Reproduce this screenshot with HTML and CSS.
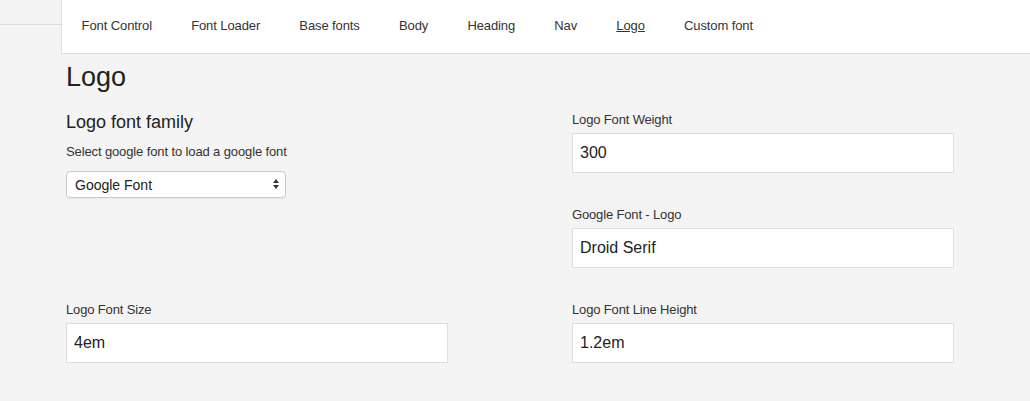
FILE: index.html
```html
<!DOCTYPE html>
<html lang="en">
<head>
<meta charset="utf-8">
<title>Logo</title>
<link rel="stylesheet" href="styles.css">
</head>
<body>
<div class="page">
  <aside class="side"><div class="side-top"></div></aside>
  <div class="main">
    <nav class="nav">
      <a class="nav-link" href="#">Font Control</a>
      <a class="nav-link" href="#">Font Loader</a>
      <a class="nav-link" href="#">Base fonts</a>
      <a class="nav-link" href="#">Body</a>
      <a class="nav-link" href="#">Heading</a>
      <a class="nav-link" href="#">Nav</a>
      <a class="nav-link nav-link-active" href="#">Logo</a>
      <a class="nav-link" href="#">Custom font</a>
    </nav>
    <section class="content">
      <h1 class="title">Logo</h1>
      <div class="grid">
        <div class="col">
          <h2 class="subtitle">Logo font family</h2>
          <p class="help">Select google font to load a google font</p>
          <div class="select-wrap">
            <select class="select">
              <option>Google Font</option>
            </select>
            <svg class="select-arrows" width="8" height="12" viewBox="0 0 8 12" aria-hidden="true">
              <polygon points="1,5 7,5 4,1" fill="#333"/>
              <polygon points="1,7 7,7 4,11" fill="#333"/>
            </svg>
          </div>
        </div>
        <div class="col">
          <div class="group">
            <label class="label">Logo Font Weight</label>
            <input class="input" type="text" value="300">
          </div>
          <div class="group">
            <label class="label">Google Font - Logo</label>
            <input class="input" type="text" value="Droid Serif">
          </div>
        </div>
        <div class="col">
          <div class="group">
            <label class="label">Logo Font Size</label>
            <input class="input" type="text" value="4em">
          </div>
        </div>
        <div class="col">
          <div class="group">
            <label class="label">Logo Font Line Height</label>
            <input class="input" type="text" value="1.2em">
          </div>
        </div>
      </div>
    </section>
  </div>
</div>
</body>
</html>
```

FILE: styles.css
```css
html, body {
  margin: 0;
  padding: 0;
  background: #f4f4f4;
  color: #333;
  font-family: "Liberation Sans", Arial, sans-serif;
}

.page {
  display: flex;
  min-height: 401px;
}

.side {
  width: 61px;
  flex: none;
}

.side-top {
  height: 24px;
  border-bottom: 1px solid #dcdcdc;
}

.main {
  flex: 1;
  min-width: 0;
}

.nav {
  display: flex;
  align-items: center;
  height: 54px;
  box-sizing: border-box;
  padding-bottom: 2px;
  background: #fff;
  border-left: 1px solid #dcdcdc;
  border-bottom: 1px solid #dcdcdc;
}

.nav-link {
  padding: 0 19.6px;
  font-size: 13px;
  line-height: 18px;
  letter-spacing: -0.1px;
  color: #333;
  text-decoration: none;
}

.nav-link-active {
  text-decoration: underline;
}

.content {
  padding: 0 5px;
}

.title {
  margin: 7px 0 18px;
  font-size: 27px;
  line-height: 32px;
  font-weight: normal;
  color: #222;
}

.grid {
  display: grid;
  grid-template-columns: 506px 1fr;
}

.subtitle {
  margin: 0 0 10px;
  font-size: 18px;
  line-height: 22px;
  font-weight: normal;
  color: #222;
}

.help {
  margin: 0 0 10px;
  font-size: 13px;
  line-height: 18px;
  letter-spacing: -0.12px;
}

.select-wrap {
  position: relative;
  width: 220px;
}

.select {
  display: block;
  width: 100%;
  height: 27px;
  box-sizing: border-box;
  margin: 0;
  padding: 0 20px 0 8px;
  -webkit-appearance: none;
  appearance: none;
  background: #fff;
  border: 1px solid #c8c8c8;
  border-radius: 4px;
  box-shadow: 0 1px 1px rgba(0, 0, 0, 0.04);
  font-family: "Liberation Sans", Arial, sans-serif;
  font-size: 14px;
  color: #222;
}

.select-arrows {
  position: absolute;
  right: 6px;
  top: 7px;
}

.group {
  margin-bottom: 33px;
}

.label {
  display: block;
  margin-bottom: 4px;
  font-size: 13px;
  line-height: 18px;
  letter-spacing: -0.15px;
  color: #333;
}

.input {
  display: block;
  width: 382px;
  height: 40px;
  box-sizing: border-box;
  margin: 0;
  padding: 0 7px;
  background: #fff;
  border: 1px solid #dedede;
  border-radius: 0;
  font-family: "Liberation Sans", Arial, sans-serif;
  font-size: 16px;
  color: #222;
  outline: none;
}
```
